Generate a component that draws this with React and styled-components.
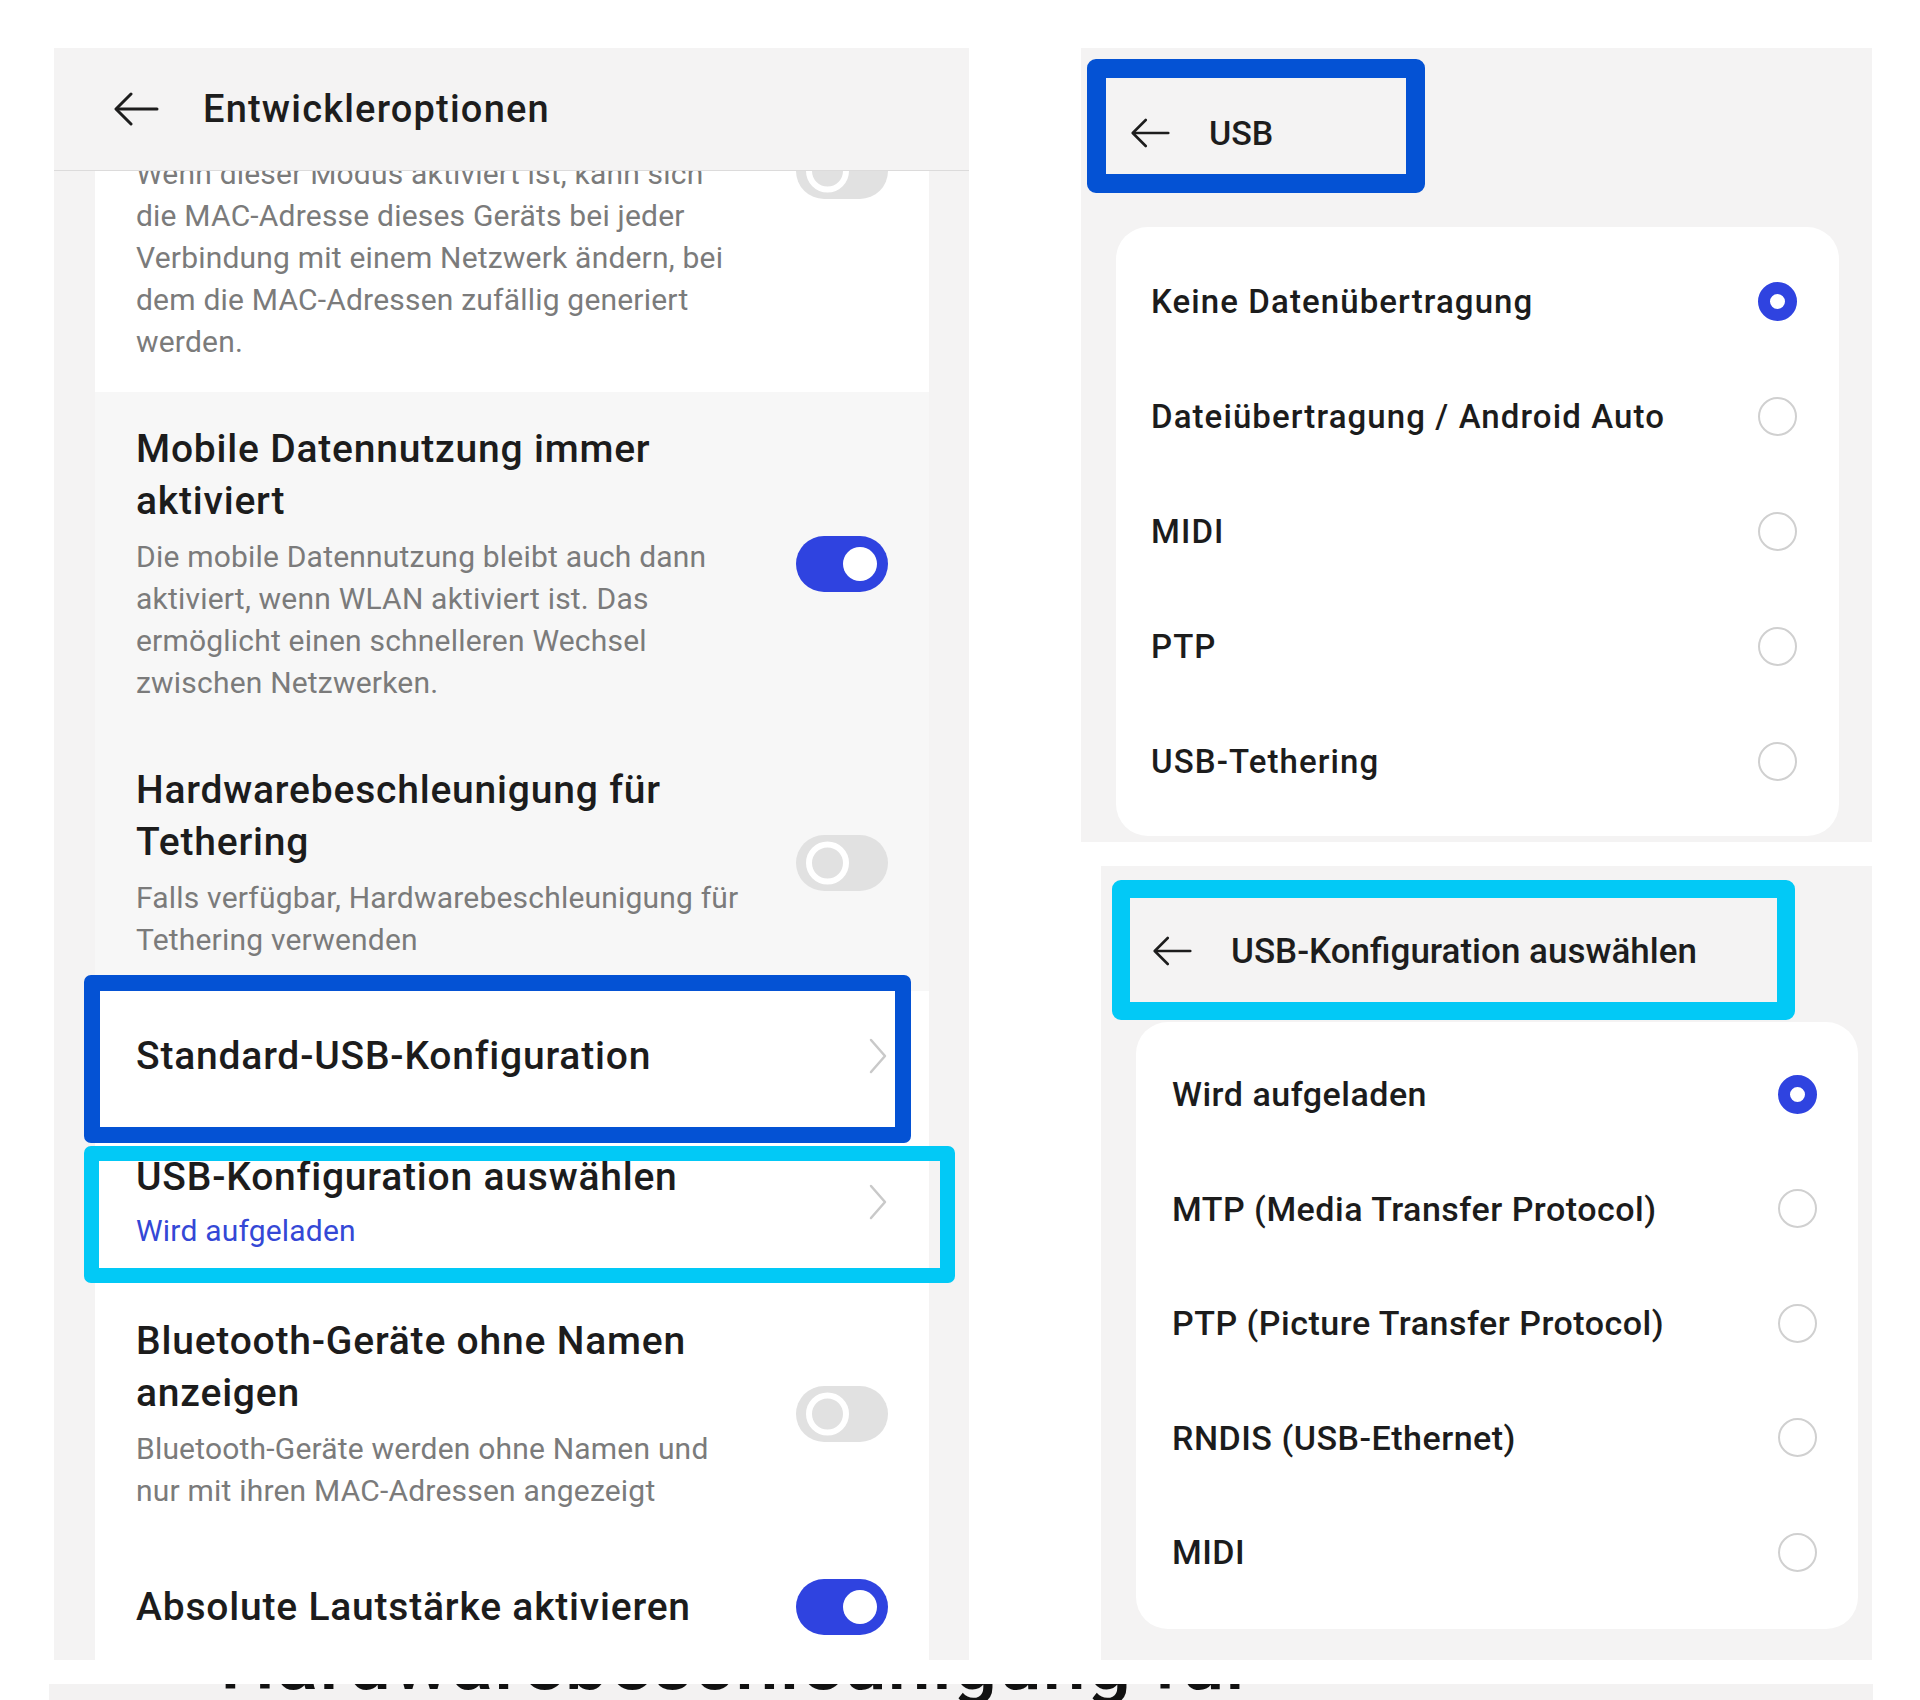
import React from 'react';
import styled, { createGlobalStyle } from 'styled-components';

const GlobalStyle = createGlobalStyle`
  body {
    margin: 0;
    background: #ffffff;
    font-family: Roboto, "Noto Sans", "Liberation Sans", sans-serif;
    color: #1c1c1c;
  }
  * { box-sizing: border-box; }
`;

const Page = styled.div`
  width: 1920px;
  height: 1700px;
  overflow: hidden;
  display: flex;
  flex-direction: column;
`;

const Panels = styled.div`
  display: flex;
  align-items: flex-start;
  padding: 48px 0 0 54px;
`;

const LeftPanel = styled.div`
  width: 915px;
  height: 1612px;
  background: #f4f3f3;
  display: flex;
  flex-direction: column;
  overflow: hidden;
`;

const Header = styled.div`
  position: relative;
  display: flex;
  align-items: center;
  gap: ${({ $gap }) => $gap}px;
  height: ${({ $height }) => $height}px;
  padding: ${({ $top = 0 }) => $top}px 0 0 ${({ $left }) => $left}px;
  flex-shrink: 0;
  border-bottom: ${({ $line }) => ($line ? '1px solid #dcdbdb' : 'none')};
  z-index: 2;
  background: #f4f3f3;
`;

const HeaderTitle = styled.span`
  font-size: ${({ $size }) => $size}px;
  letter-spacing: ${({ $track = 0 }) => $track}px;
  font-weight: 500;
  color: #1d1d1d;
  white-space: nowrap;
`;

const Content = styled.div`
  flex: 1;
  overflow: hidden;
  padding: 0 40px 0 41px;
`;

const Row = styled.div`
  position: relative;
  display: flex;
  align-items: center;
  justify-content: space-between;
  min-height: 130px;
  padding: ${({ $pad = '30px 41px' }) => $pad};
  margin-top: ${({ $shift = 0 }) => $shift}px;
  background: ${({ $tone }) => ($tone === 'grey' ? '#f7f7f7' : '#ffffff')};
`;

const TextBlock = styled.div`
  display: flex;
  flex-direction: column;
  gap: ${({ $gap = 9 }) => $gap}px;
  max-width: ${({ $width = 612 }) => $width}px;
`;

const Title = styled.div`
  font-size: 39px;
  line-height: 52px;
  letter-spacing: 0.8px;
  font-weight: 500;
  color: #1c1c1c;
`;

const Desc = styled.div`
  font-size: 30px;
  line-height: 42px;
  letter-spacing: 0.2px;
  color: ${({ $accent }) => ($accent ? '#3448d6' : '#7b7b7b')};
`;

const Toggle = styled.div`
  position: relative;
  flex-shrink: 0;
  width: 92px;
  height: 56px;
  border-radius: 28px;
  background: ${({ $on }) => ($on ? '#2f43e0' : '#e1e1e1')};
  align-self: ${({ $top }) => ($top ? 'flex-start' : 'center')};
  margin-top: ${({ $top }) => ($top ? '-10px' : '0')};

  &::after {
    content: '';
    position: absolute;
    top: 50%;
    transform: translateY(-50%);
    border-radius: 50%;
    ${({ $on }) =>
      $on
        ? `right: 11px; width: 34px; height: 34px; background: #ffffff;`
        : `left: 10px; width: 31px; height: 31px; border: 6px solid #ffffff;`}
  }
`;

const Mark = styled.div`
  position: absolute;
  pointer-events: none;
  border: ${({ $width }) => $width}px solid ${({ $color }) => $color};
  border-radius: ${({ $radius = 7 }) => $radius}px;
  z-index: 3;
`;

const RightColumn = styled.div`
  margin-left: 112px;
  width: 791px;
  display: flex;
  flex-direction: column;
  gap: 24px;
`;

const SubPanel = styled.div`
  width: ${({ $width }) => $width}px;
  margin-left: ${({ $indent = 0 }) => $indent}px;
  height: 794px;
  background: #f4f3f3;
  display: flex;
  flex-direction: column;
  overflow: hidden;
`;

const OptionCard = styled.div`
  background: #ffffff;
  border-radius: 32px;
  margin: ${({ $margin }) => $margin};
  padding: ${({ $pad }) => $pad};
`;

const Option = styled.div`
  display: flex;
  align-items: center;
  justify-content: space-between;
  height: ${({ $height = 115 }) => $height}px;
  font-size: ${({ $size }) => $size}px;
  letter-spacing: ${({ $track = 0 }) => $track}px;
  font-weight: 500;
  color: #1c1c1c;
`;

const Radio = styled.span`
  width: 39px;
  height: 39px;
  border-radius: 50%;
  flex-shrink: 0;
  border: ${({ $checked }) => ($checked ? '12px solid #2f43e0' : '2px solid #d0d0d0')};
  background: #ffffff;
`;

const BottomStrip = styled.div`
  margin: 24px 0 0 49px;
  width: 1824px;
  height: 16px;
  background: #f3f2f2;
  overflow: hidden;
  padding-left: 171px;
`;

const StripText = styled.div`
  font-size: 78px;
  line-height: 78px;
  letter-spacing: 1px;
  font-weight: 500;
  color: #111111;
  margin-top: -60px;
  white-space: nowrap;
`;

const BackArrow = ({ w = 45, h = 34 }) => (
  <svg width={w} height={h} viewBox="0 0 45 34" fill="none" stroke="#1d1d1d" strokeWidth="3" strokeLinecap="round" strokeLinejoin="round">
    <path d="M43 17H3" />
    <path d="M17 2L2 17L17 32" />
  </svg>
);

const Chevron = () => (
  <svg width="20" height="36" viewBox="0 0 20 36" fill="none" stroke="#c9c9c9" strokeWidth="2.5" strokeLinecap="round" strokeLinejoin="round">
    <path d="M3 2L17 18L3 34" />
  </svg>
);

const usbModes = [
  { label: 'Keine Datenübertragung', checked: true },
  { label: 'Dateiübertragung / Android Auto' },
  { label: 'MIDI' },
  { label: 'PTP' },
  { label: 'USB-Tethering' },
];

const configModes = [
  { label: 'Wird aufgeladen', checked: true },
  { label: 'MTP (Media Transfer Protocol)' },
  { label: 'PTP (Picture Transfer Protocol)' },
  { label: 'RNDIS (USB-Ethernet)' },
  { label: 'MIDI' },
];

export default function App() {
  return (
    <Page>
      <GlobalStyle />
      <Panels>
        <LeftPanel>
          <Header $height={123} $left={60} $gap={44} $line>
            <BackArrow />
            <HeaderTitle $size={38} $track={1.2}>Entwickleroptionen</HeaderTitle>
          </Header>
          <Content>
            <Row $shift={-48} $pad="30px 41px 29px">
              <TextBlock $width={596}>
                <Desc>
                  Wenn dieser Modus aktiviert ist, kann sich die MAC-Adresse dieses Geräts bei jeder
                  Verbindung mit einem Netzwerk ändern, bei dem die MAC-Adressen zufällig generiert
                  werden.
                </Desc>
              </TextBlock>
              <Toggle $top />
            </Row>
            <Row $tone="grey" $pad="31px 41px 30px">
              <TextBlock>
                <Title>Mobile Datennutzung immer aktiviert</Title>
                <Desc>
                  Die mobile Datennutzung bleibt auch dann aktiviert, wenn WLAN aktiviert ist. Das
                  ermöglicht einen schnelleren Wechsel zwischen Netzwerken.
                </Desc>
              </TextBlock>
              <Toggle $on />
            </Row>
            <Row $tone="grey">
              <TextBlock>
                <Title>Hardwarebeschleunigung für Tethering</Title>
                <Desc>Falls verfügbar, Hardwarebeschleunigung für Tethering verwenden</Desc>
              </TextBlock>
              <Toggle />
            </Row>
            <Row>
              <Title>Standard-USB-Konfiguration</Title>
              <Chevron />
              <Mark $width={16} $color="#0452d4" style={{ top: -16, left: -11, right: 18, bottom: -22 }} />
            </Row>
            <Row $pad="30px 41px 33px">
              <TextBlock $gap={7}>
                <Title>USB-Konfiguration auswählen</Title>
                <Desc $accent>Wird aufgeladen</Desc>
              </TextBlock>
              <Chevron />
              <Mark $width={15} $color="#02c9f6" style={{ top: 25, left: -11, right: -26, bottom: 2 }} />
            </Row>
            <Row>
              <TextBlock>
                <Title>Bluetooth-Geräte ohne Namen anzeigen</Title>
                <Desc>Bluetooth-Geräte werden ohne Namen und nur mit ihren MAC-Adressen angezeigt</Desc>
              </TextBlock>
              <Toggle />
            </Row>
            <Row>
              <Title>Absolute Lautstärke aktivieren</Title>
              <Toggle $on />
            </Row>
          </Content>
        </LeftPanel>

        <RightColumn>
          <SubPanel $width={791}>
            <Header $height={170} $left={50} $gap={39}>
              <BackArrow w={39} h={30} />
              <HeaderTitle $size={34}>USB</HeaderTitle>
              <Mark $width={19} $color="#0452d4" $radius={9} style={{ left: 6, top: 11, width: 338, height: 134 }} />
            </Header>
            <OptionCard $margin="9px 33px 0 35px" $pad="17px 42px 17px 35px">
              {usbModes.map((m) => (
                <Option key={m.label} $size={33} $track={1.1}>
                  {m.label}
                  <Radio $checked={m.checked} />
                </Option>
              ))}
            </OptionCard>
          </SubPanel>

          <SubPanel $width={771} $indent={20}>
            <Header $height={156} $top={14} $left={52} $gap={39}>
              <BackArrow w={39} h={30} />
              <HeaderTitle $size={35}>USB-Konfiguration auswählen</HeaderTitle>
              <Mark $width={18} $color="#02c9f6" $radius={9} style={{ left: 11, top: 14, width: 683, height: 140 }} />
            </Header>
            <OptionCard $margin="0 14px 0 35px" $pad="15px 41px 19px 36px">
              {configModes.map((m) => (
                <Option key={m.label} $size={34} $track={0.5} $height={114.5}>
                  {m.label}
                  <Radio $checked={m.checked} />
                </Option>
              ))}
            </OptionCard>
          </SubPanel>
        </RightColumn>
      </Panels>
      <BottomStrip>
        <StripText>Hardwarebeschleunigung für</StripText>
      </BottomStrip>
    </Page>
  );
}
